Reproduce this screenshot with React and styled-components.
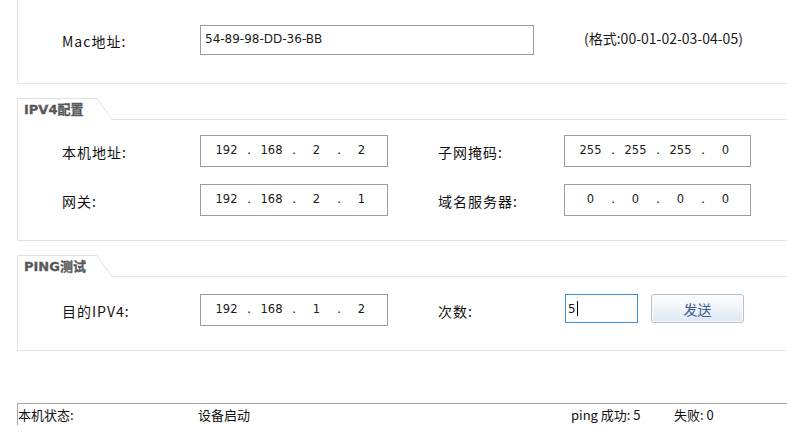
import styled, { createGlobalStyle } from "styled-components";

const GlobalStyle = createGlobalStyle`
  html, body {
    margin: 0;
    padding: 0;
    background: #ffffff;
    overflow: hidden;
  }
  body {
    font-family: "Noto Sans CJK SC", "DejaVu Sans", sans-serif;
    color: #1f1f1f;
  }
`;

function IpBox({ value }) {
  const parts = value.split(".");
  return (
    <IpField>
      {parts.map((p, i) => (
        <IpPart key={i}>
          <Octet>{p}</Octet>
          {i < parts.length - 1 && <Dot>.</Dot>}
        </IpPart>
      ))}
    </IpField>
  );
}

function GroupHeader({ title }) {
  return (
    <Header>
      <Tab>{title}</Tab>
      <Slant width="15" height="22" viewBox="0 0 15 22">
        <line x1="0" y1="0.5" x2="15" y2="21.5" stroke="#e2e2e2" strokeWidth="1" />
      </Slant>
      <HeaderLine />
    </Header>
  );
}

export default function App() {
  return (
    <Page>
      <GlobalStyle />
      <TopGroup>
        <Row $cols="138px 334px 50px auto">
          <Label>Mac地址:</Label>
          <TextField>54-89-98-DD-36-BB</TextField>
          <span />
          <Hint>(格式:00-01-02-03-04-05)</Hint>
        </Row>
      </TopGroup>

      <Group>
        <GroupHeader title="IPV4配置" />
        <Body $top={15} $gap={17}>
          <Row $cols="138px 188px 50px 126px 187px">
            <Label>本机地址:</Label>
            <IpBox value="192.168.2.2" />
            <span />
            <Label>子网掩码:</Label>
            <IpBox value="255.255.255.0" />
          </Row>
          <Row $cols="138px 188px 50px 126px 187px">
            <Label>网关:</Label>
            <IpBox value="192.168.2.1" />
            <span />
            <Label>域名服务器:</Label>
            <IpBox value="0.0.0.0" />
          </Row>
        </Body>
      </Group>

      <Group>
        <GroupHeader title="PING测试" />
        <Body $top={17} $gap={0}>
          <Row $cols="138px 188px 50px 127px 73px 13px 93px">
            <Label>目的IPV4:</Label>
            <IpBox value="192.168.1.2" />
            <span />
            <Label>次数:</Label>
            <CountField>
              5<Caret />
            </CountField>
            <span />
            <SendButton>发送</SendButton>
          </Row>
        </Body>
      </Group>

      <StatusBar>
        <StatusCell $w={180}>本机状态:</StatusCell>
        <StatusCell $w={373}>设备启动</StatusCell>
        <StatusCell $w={103}>ping 成功: 5</StatusCell>
        <StatusCell $w={80}>失败: 0</StatusCell>
      </StatusBar>
    </Page>
  );
}

const Page = styled.div`
  width: 787px;
  height: 437px;
  padding-left: 17px;
  box-sizing: border-box;
  overflow: hidden;
`;

const TopGroup = styled.div`
  width: 790px;
  height: 84px;
  box-sizing: border-box;
  border-left: 1px solid #e2e2e2;
  border-bottom: 1px solid #e2e2e2;
  padding: 24px 0 0 44px;
`;

const Group = styled.div`
  width: 790px;
  margin-top: 14px;
  box-sizing: border-box;
  border-left: 1px solid #e2e2e2;
  border-bottom: 1px solid #e2e2e2;
`;

const Header = styled.div`
  display: flex;
  height: 22px;
`;

const Tab = styled.div`
  width: 79px;
  box-sizing: border-box;
  border-top: 1px solid #e2e2e2;
  padding: 1px 0 0 6px;
  font-family: "DejaVu Sans", "Noto Sans CJK SC", sans-serif;
  font-size: 13px;
  font-weight: 700;
  line-height: 20px;
  color: #585858;
  -webkit-text-stroke: 0.3px #585858;
  white-space: nowrap;
`;

const Slant = styled.svg`
  display: block;
  flex: none;
`;

const HeaderLine = styled.div`
  flex: 1;
  border-bottom: 1px solid #e2e2e2;
`;

const Body = styled.div`
  display: flex;
  flex-direction: column;
  gap: ${(p) => p.$gap}px;
  padding: ${(p) => p.$top}px 0 24px 44px;
`;

const Row = styled.div`
  display: grid;
  grid-template-columns: ${(p) => p.$cols};
  align-items: center;
  height: 32px;
`;

const Label = styled.span`
  font-size: 14px;
  line-height: 20px;
  letter-spacing: 1px;
  color: #111;
  white-space: nowrap;
  padding-top: 2px;
`;

const Hint = styled.span`
  font-size: 14px;
  line-height: 20px;
  color: #1a1a1a;
  white-space: nowrap;
  margin-top: -4px;
`;

const TextField = styled.div`
  height: 30px;
  box-sizing: border-box;
  border: 1px solid #9c9c9c;
  padding: 0 4px;
  font-family: "DejaVu Sans", sans-serif;
  font-size: 12px;
  line-height: 26px;
  color: #1a1a1a;
`;

const IpField = styled.div`
  display: flex;
  height: 32px;
  box-sizing: border-box;
  border: 1px solid #9c9c9c;
  padding: 0 0 3px 8px;
  align-items: center;
  font-family: "DejaVu Sans", sans-serif;
  font-size: 11.5px;
  color: #1a1a1a;
`;

const IpPart = styled.div`
  display: flex;
  align-items: center;
`;

const Octet = styled.span`
  width: 35px;
  text-align: center;
`;

const Dot = styled.span`
  width: 10px;
  text-align: center;
  font-size: 13px;
`;

const CountField = styled.div`
  height: 29px;
  box-sizing: border-box;
  border: 1px solid #3d8ee0;
  padding: 0 2px;
  display: flex;
  align-items: center;
  font-family: "DejaVu Sans", sans-serif;
  font-size: 12px;
  color: #1a1a1a;
  align-self: start;
`;

const Caret = styled.span`
  display: inline-block;
  width: 1px;
  height: 15px;
  background: #000;
  margin-left: 1px;
`;

const SendButton = styled.button`
  height: 29px;
  align-self: start;
  border: 1px solid #b4c0cf;
  border-radius: 3px;
  background: linear-gradient(#fbfcfe, #f1f5fa 45%, #dde7f2);
  box-shadow: inset 0 0 0 1px rgba(255, 255, 255, 0.8);
  font-family: "Noto Sans CJK SC", sans-serif;
  font-size: 14px;
  color: #3b5e8f;
  padding: 0;
  cursor: pointer;
`;

const StatusBar = styled.div`
  display: flex;
  margin-top: 52px;
  height: 22px;
  box-sizing: border-box;
  border-top: 1px solid #a6a6a6;
  border-left: 1px solid #a6a6a6;
  align-items: center;
  font-size: 13px;
  color: #111;
`;

const StatusCell = styled.span`
  width: ${(p) => p.$w}px;
  white-space: nowrap;
  line-height: 18px;
`;
